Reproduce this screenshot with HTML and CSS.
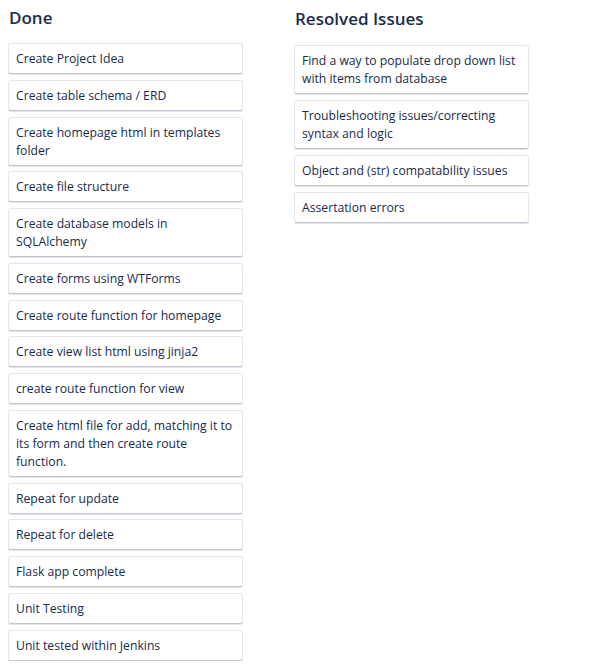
FILE: index.html
```html
<!DOCTYPE html>
<html>
<head>
<meta charset="utf-8">
<link rel="stylesheet" href="styles.css">
</head>
<body>
<div class="board">
  <section class="list">
    <h2 class="list-title">Done</h2>
    <div class="cards">
      <div class="card">Create Project Idea</div>
      <div class="card">Create table schema / ERD</div>
      <div class="card">Create homepage html in templates folder</div>
      <div class="card">Create file structure</div>
      <div class="card">Create database models in SQLAlchemy</div>
      <div class="card">Create forms using WTForms</div>
      <div class="card">Create route function for homepage</div>
      <div class="card">Create view list html using jinja2</div>
      <div class="card">create route function for view</div>
      <div class="card">Create html file for add, matching it to its form and then create route function.</div>
      <div class="card">Repeat for update</div>
      <div class="card">Repeat for delete</div>
      <div class="card">Flask app complete</div>
      <div class="card">Unit Testing</div>
      <div class="card">Unit tested within Jenkins</div>
    </div>
  </section>
  <section class="list list-right">
    <h2 class="list-title">Resolved Issues</h2>
    <div class="cards cards-right">
      <div class="card">Find a way to populate drop down list with items from database</div>
      <div class="card">Troubleshooting issues/correcting syntax and logic</div>
      <div class="card">Object and (str) compatability issues</div>
      <div class="card">Assertation errors</div>
    </div>
  </section>
</div>
</body>
</html>
```

FILE: styles.css
```css
html, body {
  margin: 0;
  padding: 0;
  background: #ffffff;
}
body {
  font-family: "Open Sans", "Noto Sans", sans-serif;
  color: #172b4d;
}
.board {
  display: flex;
  gap: 51px;
  padding: 0 0 0 8px;
}
.list {
  width: 235px;
}
.list-right {
  padding-top: 1px;
}
.list-title {
  margin: 0;
  font-size: 17px;
  font-weight: 600;
  line-height: 22px;
  padding: 7px 0 14px 1px;
}
.cards {
  display: flex;
  flex-direction: column;
  gap: 5.75px;
}
.cards-right {
  margin-top: 1px;
  gap: 6px;
}
.card {
  background: #fff;
  border: 1px solid #e4e6ea;
  border-bottom-color: #c1c7d0;
  border-radius: 3px;
  box-shadow: 0 1px 0 rgba(9, 30, 66, 0.12);
  padding: 6px 6px 5px 7px;
  font-size: 12.2px;
  line-height: 18px;
}
```
